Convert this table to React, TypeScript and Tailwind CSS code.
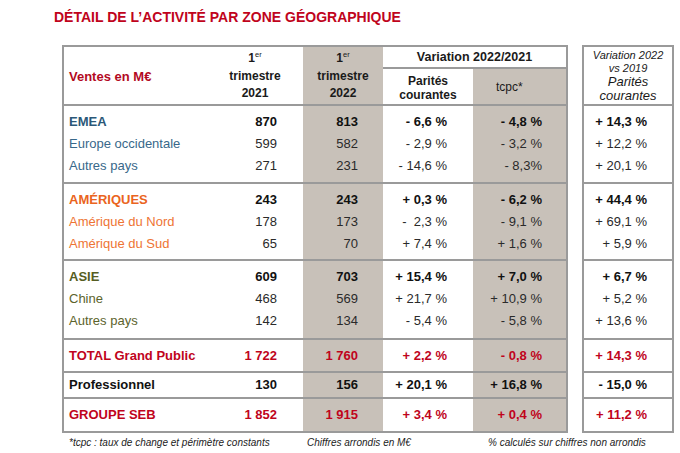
import React from "react";

type Row = {
  label: string;
  values: string[]; // 2021, 2022, parites, tcpc, vs 2019
  bold?: boolean;
};

type Section = {
  labelColor: string;
  headColor: string;
  height: string;
  rows: Row[];
};

const sections: Section[] = [
  {
    headColor: "text-[#2b5878]",
    labelColor: "text-[#38688a]",
    height: "h-[78px]",
    rows: [
      { label: "EMEA", bold: true, values: ["870", "813", "- 6,6 %", "- 4,8 %", "+ 14,3 %"] },
      { label: "Europe occidentale", values: ["599", "582", "- 2,9 %", "- 3,2 %", "+ 12,2 %"] },
      { label: "Autres pays", values: ["271", "231", "- 14,6 %", "- 8,3%", "+ 20,1 %"] },
    ],
  },
  {
    headColor: "text-[#ea6420]",
    labelColor: "text-[#ee7434]",
    height: "h-[77px]",
    rows: [
      { label: "AMÉRIQUES", bold: true, values: ["243", "243", "+ 0,3 %", "- 6,2 %", "+ 44,4 %"] },
      { label: "Amérique du Nord", values: ["178", "173", "-  2,3 %", "- 9,1 %", "+ 69,1 %"] },
      { label: "Amérique du Sud", values: ["65", "70", "+ 7,4 %", "+ 1,6 %", "+ 5,9 %"] },
    ],
  },
  {
    headColor: "text-[#565d22]",
    labelColor: "text-[#5c632c]",
    height: "h-[79px]",
    rows: [
      { label: "ASIE", bold: true, values: ["609", "703", "+ 15,4 %", "+ 7,0 %", "+ 6,7 %"] },
      { label: "Chine", values: ["468", "569", "+ 21,7 %", "+ 10,9 %", "+ 5,2 %"] },
      { label: "Autres pays", values: ["142", "134", "- 5,4 %", "- 5,8 %", "+ 13,6 %"] },
    ],
  },
];

type Total = { label: string; values: string[]; red: boolean; height: string; last?: boolean };

const totals: Total[] = [
  { label: "TOTAL Grand Public", values: ["1 722", "1 760", "+ 2,2 %", "- 0,8 %", "+ 14,3 %"], red: true, height: "h-[33px]" },
  { label: "Professionnel", values: ["130", "156", "+ 20,1 %", "+ 16,8 %", "- 15,0 %"], red: false, height: "h-[26px]" },
  { label: "GROUPE SEB", values: ["1 852", "1 915", "+ 3,4 %", "+ 0,4 %", "+ 11,2 %"], red: true, height: "h-[32px]", last: true },
];

const cell = (r: Row, i: number) => (
  <div
    key={i}
    className={`whitespace-pre leading-[22px] ${r.bold ? "font-bold text-[#111]" : "text-[#2a2a2a]"}`}
  >
    {r.values[i]}
  </div>
);

const App: React.FC = () => {
  return (
    <div
      className="w-[680px] h-[453px] bg-white text-[13px] text-[#111]"
      style={{ fontFamily: '"Liberation Sans", Arial, sans-serif' }}
    >
      <h1 className="pl-[54px] pt-[9px] text-[14px] leading-[16px] font-bold text-[#c0041c]">
        DÉTAIL DE L’ACTIVITÉ PAR ZONE GÉOGRAPHIQUE
      </h1>

      <div className="mt-[20px] ml-[62px] flex gap-[14px]">
        {/* main table */}
        <div className="w-[506px] border-2 border-[#9a9a9a]">
          <div className="flex h-[59px] border-b-2 border-[#9a9a9a]">
            <div className="w-[159px] pl-[5px] pt-[3px] flex items-center font-bold text-[#b3091f]">
              Ventes en M€
            </div>
            <div className="w-[80px] pr-[16px] flex flex-col items-center justify-center text-[12px] leading-[16.5px] font-bold text-[#1a1a1a]">
              <div>
                1<span className="relative -top-[5px] text-[7.5px] font-normal">er</span>
              </div>
              <div>trimestre</div>
              <div>2021</div>
            </div>
            <div className="w-[80px] bg-[#c8c1b9] flex flex-col items-center justify-center text-[12px] leading-[16.5px] font-bold text-[#1a1a1a]">
              <div>
                1<span className="relative -top-[5px] text-[7.5px] font-normal">er</span>
              </div>
              <div>trimestre</div>
              <div>2022</div>
            </div>
            <div className="w-[183px] flex flex-col">
              <div className="h-[22px] border-b-2 border-[#9a9a9a] flex items-center justify-center font-bold text-[12.5px] text-[#1a1a1a]">
                Variation 2022/2021
              </div>
              <div className="flex flex-1">
                <div className="w-[90px] flex flex-col items-center justify-center pt-[2px] text-[12px] leading-[14px] font-bold text-[#1a1a1a]">
                  <div>Parités</div>
                  <div>courantes</div>
                </div>
                <div className="w-[93px] bg-[#c8c1b9] flex items-center pl-[23px] text-[12px] text-[#1a1a1a]">
                  tcpc*
                </div>
              </div>
            </div>
          </div>

          {sections.map((s, si) => (
            <div key={si} className={`flex ${s.height} border-b-2 border-[#9a9a9a]`}>
              <div className="w-[159px] pl-[5px] pt-[5px]">
                {s.rows.map((r, ri) => (
                  <div
                    key={ri}
                    className={`leading-[22px] ${r.bold ? `font-bold ${s.headColor}` : s.labelColor}`}
                  >
                    {r.label}
                  </div>
                ))}
              </div>
              <div className="w-[80px] pr-[26px] pt-[5px] text-right">{s.rows.map((r) => cell(r, 0))}</div>
              <div className="w-[80px] pr-[25px] pt-[5px] text-right bg-[#c8c1b9]">{s.rows.map((r) => cell(r, 1))}</div>
              <div className="w-[90px] pr-[26px] pt-[5px] text-right">{s.rows.map((r) => cell(r, 2))}</div>
              <div className="w-[93px] pr-[24px] pt-[5px] text-right bg-[#c8c1b9]">{s.rows.map((r) => cell(r, 3))}</div>
            </div>
          ))}

          {totals.map((t, ti) => {
            const color = t.red ? "text-[#c0041c]" : "text-[#111]";
            return (
              <div
                key={ti}
                className={`flex ${t.height} font-bold ${color} ${t.last ? "" : "border-b-2 border-[#9a9a9a]"}`}
              >
                <div className="w-[159px] pl-[5px] flex items-center">{t.label}</div>
                <div className="w-[80px] pr-[26px] flex items-center justify-end">{t.values[0]}</div>
                <div className="w-[80px] pr-[25px] flex items-center justify-end bg-[#c8c1b9]">{t.values[1]}</div>
                <div className="w-[90px] pr-[26px] flex items-center justify-end">{t.values[2]}</div>
                <div className="w-[93px] pr-[24px] flex items-center justify-end bg-[#c8c1b9]">{t.values[3]}</div>
              </div>
            );
          })}
        </div>

        {/* vs 2019 table */}
        <div className="w-[92px] border-2 border-[#9a9a9a]">
          <div className="h-[59px] border-b-2 border-[#9a9a9a] flex flex-col items-center justify-center italic text-[#1a1a1a]">
            <div className="text-[11px] leading-[13px]">Variation 2022</div>
            <div className="text-[11px] leading-[13px]">vs 2019</div>
            <div className="text-[13px] leading-[14px]">Parités</div>
            <div className="text-[13px] leading-[14px]">courantes</div>
          </div>
          {sections.map((s, si) => (
            <div key={si} className={`${s.height} border-b-2 border-[#9a9a9a] pr-[25px] pt-[5px] text-right`}>
              {s.rows.map((r) => cell(r, 4))}
            </div>
          ))}
          {totals.map((t, ti) => (
            <div
              key={ti}
              className={`flex ${t.height} items-center justify-end pr-[25px] font-bold ${t.red ? "text-[#c0041c]" : "text-[#111]"} ${t.last ? "" : "border-b-2 border-[#9a9a9a]"}`}
            >
              {t.values[4]}
            </div>
          ))}
        </div>
      </div>

      <div className="mt-[4px] ml-[69px] flex italic text-[10px] leading-[12px] text-[#222]">
        <div className="w-[238px]">*tcpc : taux de change et périmètre constants</div>
        <div className="w-[181px]">Chiffres arrondis en M€</div>
        <div>% calculés sur chiffres non arrondis</div>
      </div>
    </div>
  );
};

export default App;
